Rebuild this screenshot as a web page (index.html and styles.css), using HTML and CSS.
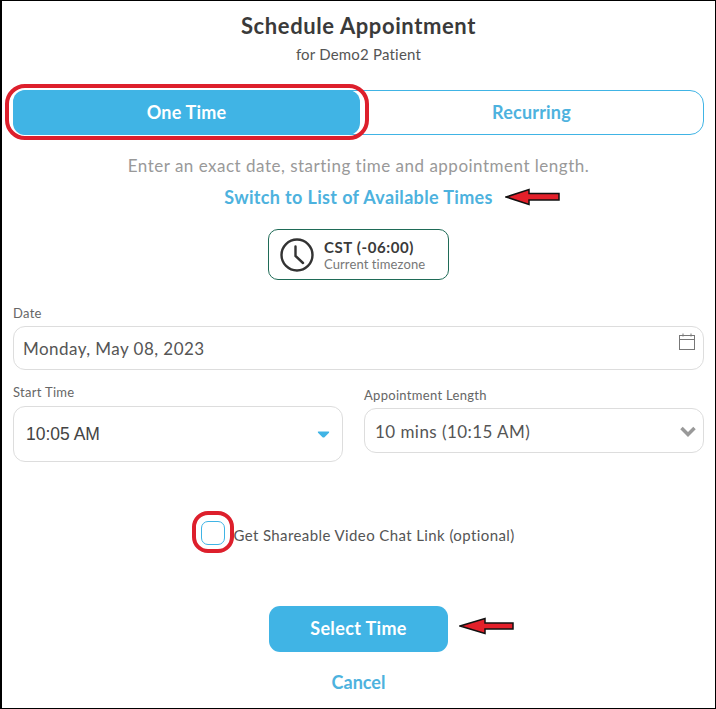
FILE: index.html
```html
<!DOCTYPE html>
<html lang="en">

<head>
    <meta charset="UTF-8">
    <meta name="viewport" content="width=device-width, initial-scale=1.0">
    <title>Schedule Appointment</title>
    <link rel="stylesheet" href="styles.css">
</head>

<body>
    <main class="frame">
        <h1 class="title">Schedule Appointment</h1>
        <p class="subtitle">for Demo2 Patient</p>

        <div class="tabs">
            <button type="button" class="tab tab-active">One Time</button>
            <button type="button" class="tab">Recurring</button>
            <span class="ring ring-tab"></span>
        </div>

        <p class="hint">Enter an exact date, starting time and appointment length.</p>
        <div class="switch-row">
            <a class="switch-link">Switch to List of Available Times</a>
            <svg class="arrow arrow-switch" width="56" height="18" viewBox="0 0 56 18">
                <path d="M1 9 L24 1.500 V5.500 H54 V12 H24 V16.500 Z" fill="#e3202a" stroke="#111" stroke-width="1.500" />
            </svg>
        </div>

        <div class="timezone">
            <svg width="36" height="36" viewBox="0 0 36 36" fill="none" stroke="#333" stroke-width="2.400" stroke-linecap="round">
                <circle cx="18" cy="18" r="15.500" />
                <path d="M16.500 9.500 V19 L24 26" />
            </svg>
            <div>
                <div class="tz-name">CST (-06:00)</div>
                <div class="tz-note">Current timezone</div>
            </div>
        </div>

        <div class="date-field">
            <label class="field-label">Date</label>
            <div class="input input-date">
                <span>Monday, May 08, 2023</span>
                <svg class="calendar" width="16" height="18" viewBox="0 0 16 18" fill="none" stroke="#777" stroke-width="1">
                    <rect x="0.500" y="2.500" width="15" height="14" />
                    <path d="M0.500 6.500 H15.500 M4 0.500 V3.500 M12 0.500 V3.500" />
                </svg>
            </div>
        </div>

        <div class="time-row">
            <div class="start-col">
                <label class="field-label">Start Time</label>
                <div class="input input-start">
                    <span>10:05 AM</span>
                    <svg class="caret" width="13" height="7" viewBox="0 0 13 7">
                        <path d="M1.500 0.500 H11.500 Q12.800 0.500 12 1.700 L7.500 6.200 Q6.500 7 5.500 6.200 L1 1.700 Q0.200 0.500 1.500 0.500 Z" fill="#40b4e5" />
                    </svg>
                </div>
            </div>
            <div class="length-col">
                <label class="field-label">Appointment Length</label>
                <div class="input input-length">
                    <span>10 mins (10:15 AM)</span>
                    <svg width="16" height="11" viewBox="0 0 16 11" fill="none" stroke="#999" stroke-width="3.500">
                        <path d="M1.500 2 L8 8.500 L14.500 2" />
                    </svg>
                </div>
            </div>
        </div>

        <div class="video-row">
            <span class="checkbox">
                <span class="ring ring-check"></span>
            </span>
            <span class="video-text">Get Shareable Video Chat Link (optional)</span>
        </div>

        <div class="submit-row">
            <button type="button" class="submit">Select Time</button>
            <svg class="arrow arrow-submit" width="56" height="18" viewBox="0 0 56 18">
                <path d="M1 9 L26 1.500 V6 H54 V12 H26 V16.500 Z" fill="#e3202a" stroke="#111" stroke-width="1.500" />
            </svg>
        </div>
        <a class="cancel">Cancel</a>
    </main>
</body>

</html>
```

FILE: styles.css
```css
* {
    box-sizing: border-box;
}

html,
body {
    margin: 0;
    height: 100%;
}

body {
    background-color: #fff;
    color: #333;
    font-family: "Lato", "Noto Sans", sans-serif;
}

.frame {
    height: 709px;
    border-style: solid;
    border-color: #000;
    border-width: 1px 1px 1px 2px;
    padding: 0 11px;
    display: flex;
    flex-direction: column;
    align-items: center;
    overflow: hidden;
}

.title {
    margin: 11px 0 0;
    font-size: 22px;
    line-height: 28px;
    font-weight: 700;
    letter-spacing: 0.6px;
    color: #3a3a3a;
}

.subtitle {
    margin: 4px 0 0;
    font-size: 15px;
    line-height: 20px;
    letter-spacing: 0.2px;
    color: #555;
}

.tabs {
    position: relative;
    width: 691px;
    height: 45px;
    margin-top: 26px;
    display: flex;
    border: 1px solid #40b4e5;
    border-radius: 14px;
}

.tab {
    flex: 1;
    border: 0;
    background: none;
    color: #4db2de;
    font-family: inherit;
    font-size: 18px;
    font-weight: 700;
    letter-spacing: 0.2px;
    padding: 0 0 2px;
}

.tab-active {
    flex: none;
    width: 347px;
    margin: -1px 0 -1px -1px;
    background-color: #40b4e5;
    border-radius: 12px;
    color: #fff;
}

.ring {
    position: absolute;
    border: 4.500px solid #dd1f2c;
}

.ring-tab {
    left: -9px;
    top: -7px;
    width: 364px;
    height: 56px;
    border-radius: 20px;
}

.hint {
    margin: 20px 0 0;
    font-size: 17px;
    line-height: 22px;
    letter-spacing: 0.5px;
    color: #999;
}

.switch-row {
    position: relative;
    margin-top: 9px;
}

.switch-link {
    font-size: 18px;
    line-height: 22px;
    font-weight: 700;
    letter-spacing: 0.35px;
    color: #4db2de;
}

.arrow {
    position: absolute;
}

.arrow-switch {
    left: 281px;
    top: 2px;
}

.timezone {
    width: 181px;
    height: 51px;
    margin-top: 21px;
    padding-left: 10px;
    display: flex;
    align-items: center;
    gap: 9px;
    border: 1px solid #1f6b57;
    border-radius: 10px;
}

.tz-name {
    font-size: 15px;
    line-height: 18px;
    font-weight: 700;
    letter-spacing: 0.6px;
    color: #3a3a3a;
}

.tz-note {
    font-size: 13px;
    line-height: 16px;
    letter-spacing: 0.1px;
    color: #777;
}

.date-field {
    width: 691px;
    margin-top: 24px;
}

.field-label {
    display: block;
    font-size: 13px;
    line-height: 18px;
    letter-spacing: 0.3px;
    color: #666;
}

.input {
    display: flex;
    justify-content: space-between;
    align-items: center;
    border: 1px solid #ddd;
    border-radius: 12px;
    background-color: #fff;
    color: #555;
    font-size: 17px;
    letter-spacing: 0.45px;
}

.input-date {
    height: 44px;
    margin-top: 4px;
    padding: 0 9px;
}

.calendar {
    align-self: flex-start;
    margin-top: 6px;
    margin-right: -1px;
}

.time-row {
    width: 691px;
    display: grid;
    grid-template-columns: 330px 340px;
    justify-content: space-between;
}

.start-col {
    margin-top: 13px;
}

.length-col {
    margin-top: 16px;
}

.input-start {
    height: 56px;
    margin-top: 5px;
    padding: 0 12px;
    font-family: "Liberation Sans", sans-serif;
    font-size: 17.500px;
    letter-spacing: 0;
    color: #444;
}

.input-length {
    height: 45px;
    margin-top: 4px;
    padding: 1px 7px 0 10px;
}

.video-row {
    margin-top: 59px;
    margin-left: -1px;
    display: flex;
    align-items: center;
    gap: 8px;
    font-size: 15px;
    letter-spacing: 0.4px;
    color: #555;
}

.video-text {
    padding-top: 4px;
}

.checkbox {
    position: relative;
    width: 24px;
    height: 24px;
    border: 1px solid #40b4e5;
    border-radius: 7px;
}

.ring-check {
    left: -10px;
    top: -11px;
    width: 42px;
    height: 42px;
    border-radius: 16px;
}

.submit-row {
    position: relative;
    margin-top: 61px;
}

.submit {
    display: block;
    width: 179px;
    height: 46px;
    border: 0;
    border-radius: 11px;
    background-color: #40b4e5;
    color: #fff;
    font-family: inherit;
    font-size: 18px;
    font-weight: 700;
    letter-spacing: 0.35px;
    padding: 0 0 2px;
}

.arrow-submit {
    left: 190px;
    top: 11px;
}

.cancel {
    margin-top: 19px;
    font-size: 18px;
    line-height: 22px;
    font-weight: 700;
    color: #4db2de;
}
```
